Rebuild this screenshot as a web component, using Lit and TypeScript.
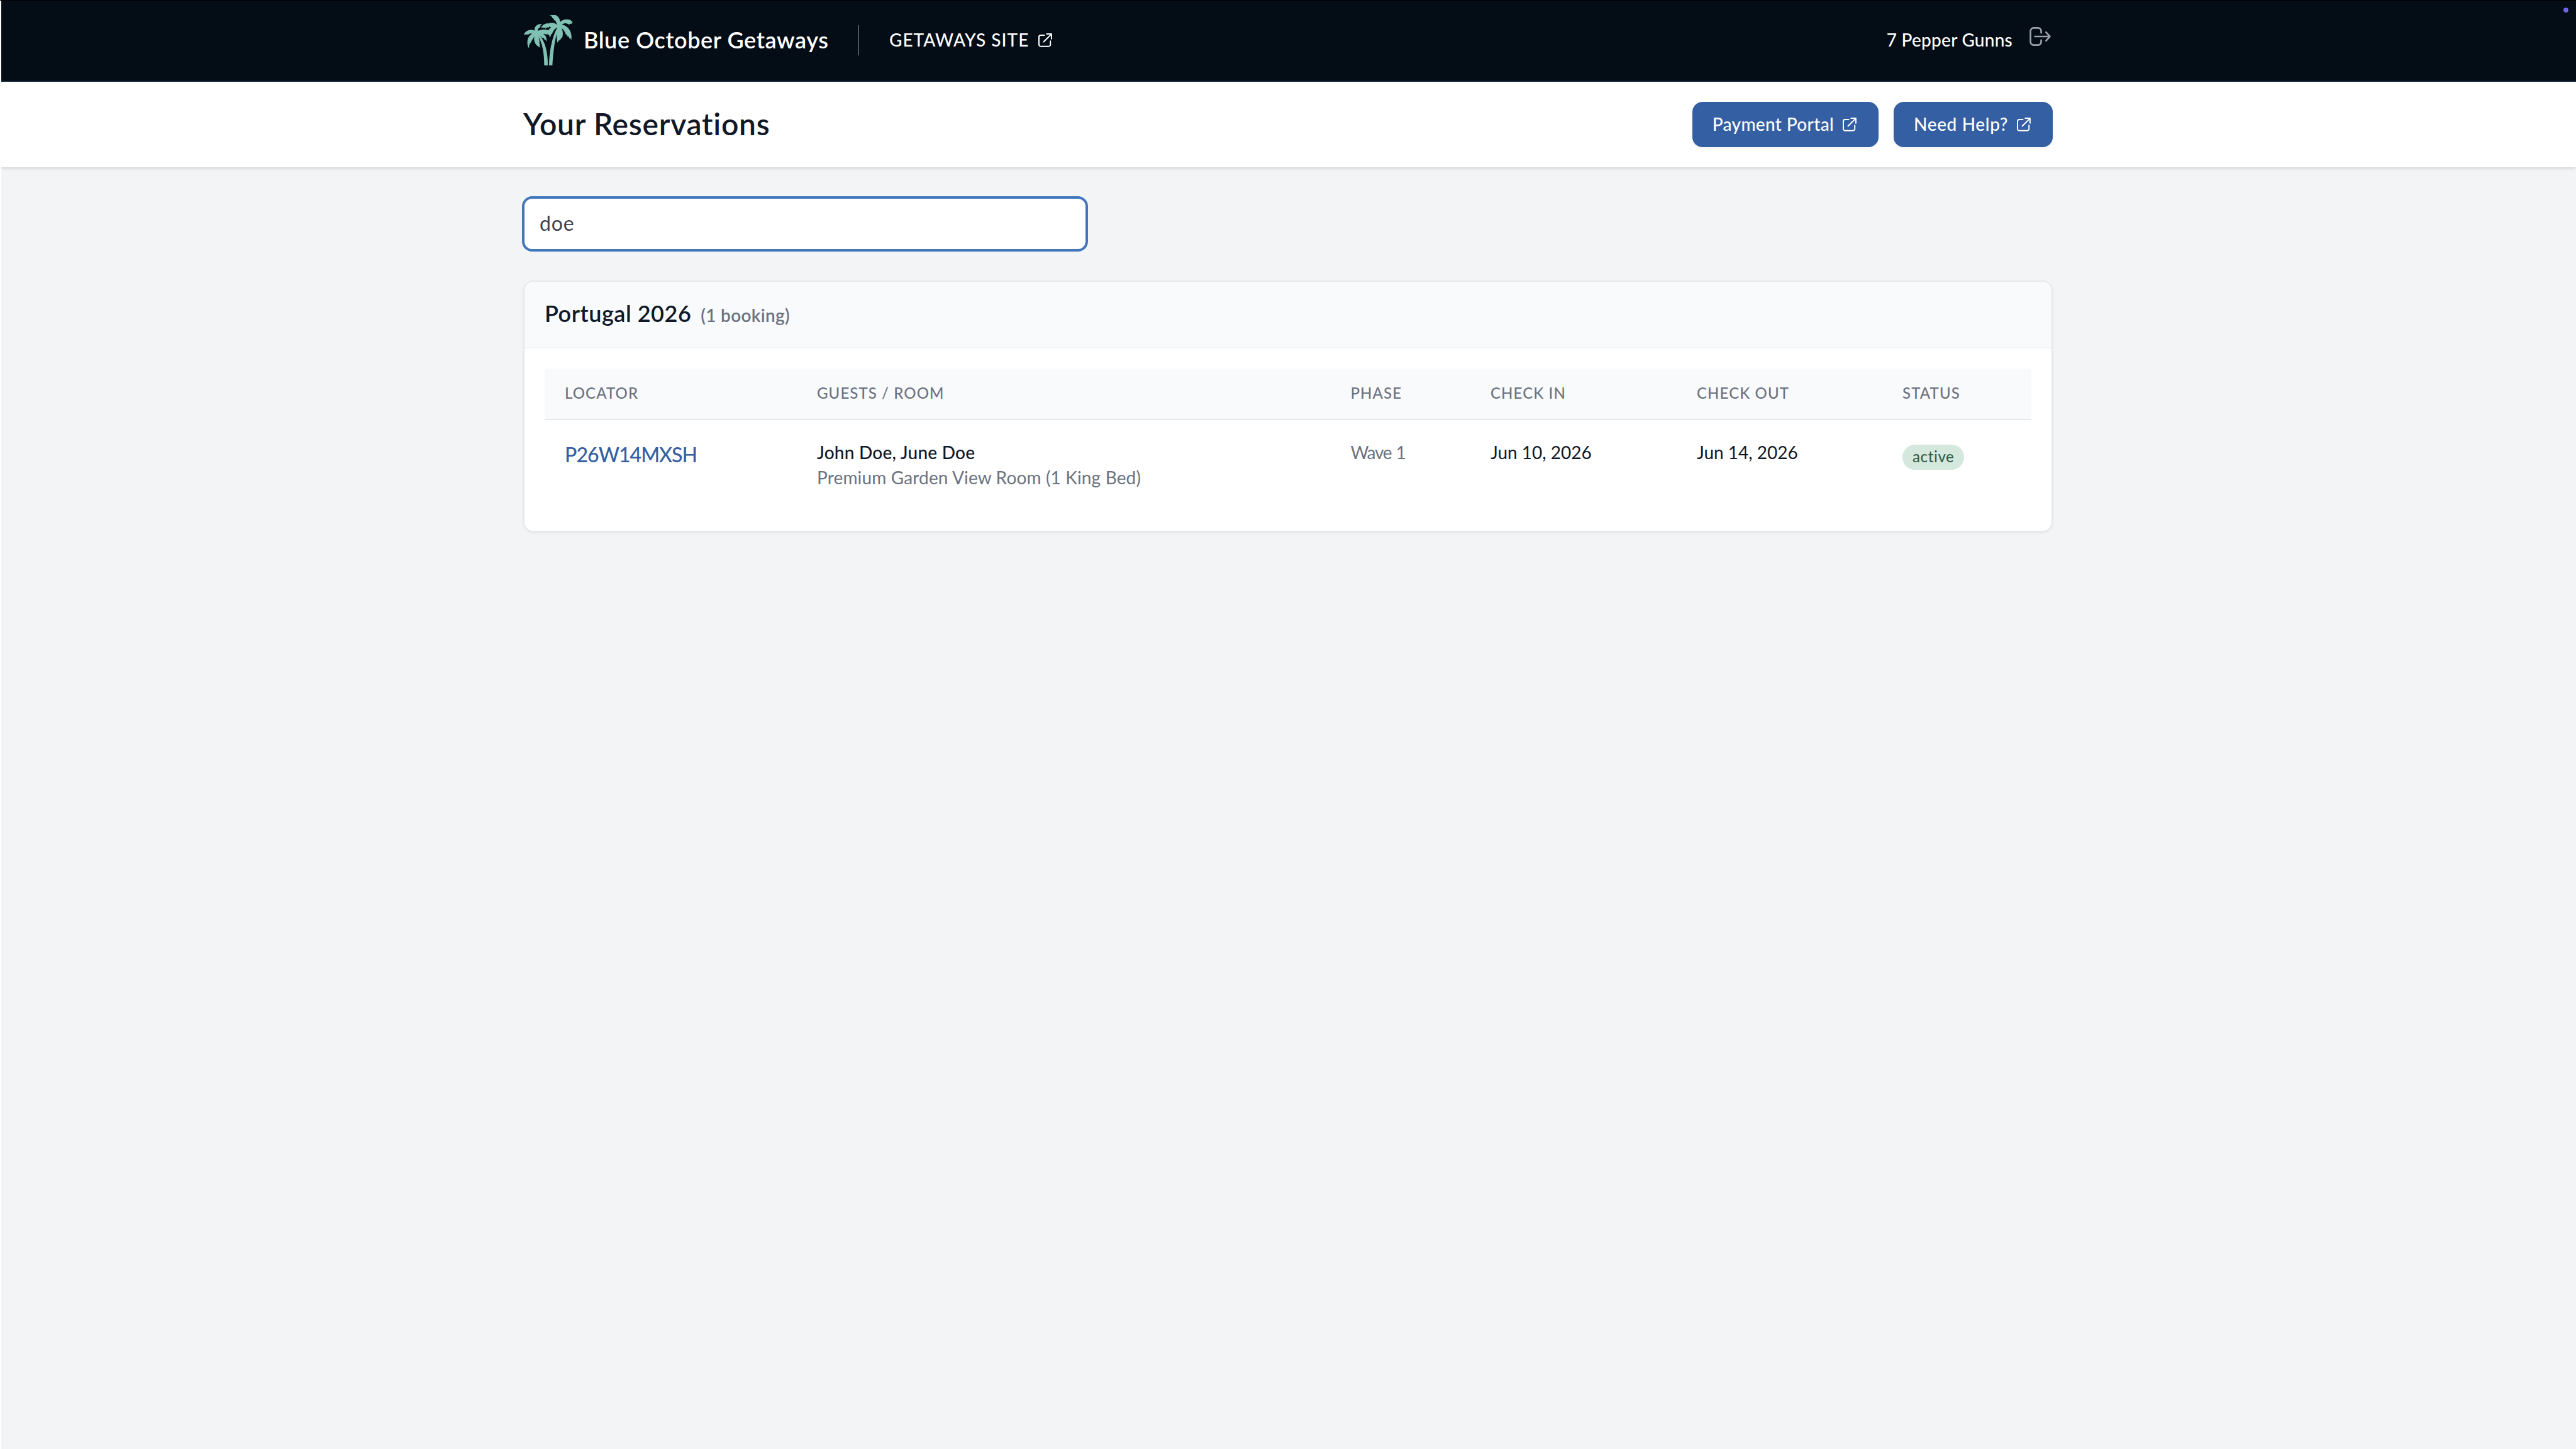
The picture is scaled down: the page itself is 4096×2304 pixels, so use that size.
import { LitElement, css, html, svg } from 'lit';
import { customElement, property } from 'lit/decorators.js';

// right trunk, left trunk, right crown, left crown
const palms = svg`
	<path d="M144 267C145 205 156 140 180 92L187 90C172 140 163 205 160 267Z"/>
	<path d="M121 267C121 212 114 160 88 120L96 119C126 152 139 205 138 267Z"/>
	<path d="M186 76C180 70 178 60 175 54L166 50L168 46L158 40L160 37L154 33L155 30L145 27H176C190 34 197 48 197 60C210 45 240 43 250 54L258 62L250 63L253 69L244 68L240 73L232 68C220 64 210 68 206 73C235 78 257 108 250 147L245 136L241 138L237 128L232 129L229 120L224 119C220 104 210 94 205 90C211 108 212 124 205 138L200 138L198 147L191 148L184 159L182 146C178 125 179 105 184 90L180 88C170 94 163 104 158 118L153 119L152 128L147 133L145 123L141 118L137 110L140 100C145 92 150 88 154 86L146 82L138 90L137 84L126 93L127 85L117 90L116 85L105 89C112 72 128 65 142 67C157 60 172 64 182 72Z"/>
	<path d="M74 110C66 114 62 116 56 115L48 117L44 123L38 117L34 124L30 118L23 124C28 100 58 92 75 102C72 82 88 66 112 69L102 75L106 80L99 82L101 87L94 89C91 94 90 98 91 102C108 94 128 94 140 100L152 106L147 110L150 116L143 114L140 122L134 117L130 121L124 116L117 117C128 124 134 136 132 153L126 143L122 145L120 136L114 138C108 130 100 124 95 122C94 134 98 146 99 156L97 161L102 167L98 170L103 182C82 176 68 152 74 130C66 142 60 152 56 160L52 161L53 168L48 168L50 176L46 184C34 152 42 122 74 110Z"/>
`;

@customElement('bo-external-icon')
export class ExternalIcon extends LitElement {

	static styles = css`
		:host {
			display: block;
			width: 28px;
			height: 28px;
		}
		svg {
			display: block;
			fill: none;
			stroke: currentColor;
			stroke-width: 2;
			stroke-linecap: round;
			stroke-linejoin: round;
		}
	`

	render() {
		return html`
		<svg width="28" height="28" viewBox="-3 -3 28 28">
			<path d="M9.5 2.9H3.8A2.8 2.8 0 0 0 1 5.7V17.9A2.8 2.8 0 0 0 3.8 20.7H16.4A2.8 2.8 0 0 0 19.2 17.9V12.2"/>
			<path d="M8.5 13.5L20.9 1.1M13.2 1.1H20.9V8.8"/>
		</svg>
		`
	}
}

@customElement('bo-navbar')
export class Navbar extends LitElement {

	@property({type: String}) user = '';

	static styles = css`
		:host {
			display: block;
		}
		nav {
			box-sizing: border-box;
			height: 130px;
			background: #040c15;
			border-top: 1px solid #000000;
			border-bottom: 2px solid #0b1a2f;
			color: #ffffff;
		}
		.inner {
			width: 2432px;
			height: 126px;
			margin: 0 auto;
			display: flex;
			align-items: center;
		}
		.logo {
			width: 80px;
			height: 80px;
			margin-right: 16px;
			fill: #80c1b3;
		}
		.brand {
			font-size: 36px;
			font-weight: 600;
			letter-spacing: 0.6px;
			padding-bottom: 3px;
		}
		.divider {
			width: 2px;
			height: 48px;
			margin: 0 48px 0 46.5px;
			background: #50555c;
		}
		.link {
			display: flex;
			align-items: center;
			gap: 12px;
			font-size: 28px;
			font-weight: 500;
			letter-spacing: 1px;
		}
		.link span, .user {
			padding-bottom: 2px;
		}
		.user {
			margin-left: auto;
			margin-right: 24px;
			font-size: 28px;
			font-weight: 500;
			letter-spacing: 0.25px;
		}
		.logout {
			width: 40px;
			height: 40px;
			margin-bottom: 12px;
			fill: none;
			stroke: #9ca0ad;
			stroke-width: 2.7;
			stroke-linecap: round;
			stroke-linejoin: round;
		}
	`

	render() {
		return html`
		<nav>
			<div class="inner">
				<svg class="logo" viewBox="21 27 240 240">${palms}</svg>
				<span class="brand">Blue October Getaways</span>
				<span class="divider"></span>
				<a class="link"><span>GETAWAYS SITE</span><bo-external-icon></bo-external-icon></a>
				<span class="user">${this.user}</span>
				<svg class="logout" viewBox="0 0 40 40">
					<path d="M21.6 14.2V11.4A5 5 0 0 0 16.6 6.4H9.6A5 5 0 0 0 4.6 11.4V28.6A5 5 0 0 0 9.6 33.6H16.6A5 5 0 0 0 21.6 28.6V25.8"/>
					<path d="M11.5 20H35.5M29.3 13.2L35.5 20L29.3 26.8"/>
				</svg>
			</div>
		</nav>
		`
	}
}

@customElement('bo-page-header')
export class PageHeader extends LitElement {

	@property({type: String}) heading = '';
	@property({attribute: false}) links: string[] = [];

	static styles = css`
		:host {
			display: block;
		}
		header {
			height: 136px;
			background: #ffffff;
			box-shadow: 0 2px 6px rgba(0, 0, 0, 0.1), 0 2px 4px -2px rgba(0, 0, 0, 0.1);
		}
		.inner {
			width: 2432px;
			height: 136px;
			margin: 0 auto;
			display: flex;
			align-items: center;
			gap: 24px;
		}
		h1 {
			margin: 0 auto 0 0;
			padding-bottom: 3px;
			font-size: 48px;
			font-weight: 600;
			letter-spacing: 0.75px;
			color: #111827;
		}
		.button {
			box-sizing: border-box;
			height: 72px;
			padding: 0 32px;
			display: flex;
			align-items: center;
			gap: 11px;
			border-radius: 16px;
			background: #355fa3;
			box-shadow: 0 2px 4px rgba(0, 0, 0, 0.05);
			color: #ffffff;
			font-size: 28px;
			font-weight: 500;
			letter-spacing: 0.34px;
		}
		.button:last-child {
			letter-spacing: 0.65px;
		}
		.button span {
			padding-bottom: 2px;
		}
	`

	render() {
		return html`
		<header>
			<div class="inner">
				<h1>${this.heading}</h1>
				${this.links.map(link => html`
					<a class="button"><span>${link}</span><bo-external-icon></bo-external-icon></a>
				`)}
			</div>
		</header>
		`
	}
}

@customElement('bo-trip-card')
export class TripCard extends LitElement {

	@property({type: String}) trip = '';
	@property({attribute: false}) bookings: any[] = [];

	static styles = css`
		:host {
			display: block;
		}
		.card {
			box-sizing: border-box;
			height: 400px;
			border: 2px solid #e5e7eb;
			border-radius: 16px;
			overflow: hidden;
			background: #ffffff;
			box-shadow: 0 2px 4px rgba(0, 0, 0, 0.05);
		}
		.title {
			box-sizing: border-box;
			height: 106px;
			padding: 28px 32px 0;
			display: flex;
			align-items: baseline;
			gap: 15px;
			background: #f9fafc;
			border-bottom: 2px solid #f3f4f6;
		}
		h2 {
			margin: 0;
			font-size: 36px;
			font-weight: 600;
			letter-spacing: 0.53px;
			color: #111827;
		}
		.count {
			font-size: 28px;
			font-weight: 600;
			letter-spacing: 0.3px;
			color: #6b7280;
		}
		.table {
			padding: 32px;
		}
		.row {
			display: grid;
			grid-template-columns: 401px 848.5px 222.5px 328px 327px 237px;
		}
		.row > div {
			padding: 31px 32px 0;
		}
		.head {
			height: 80px;
			background: #f9fafc;
			border-bottom: 2px solid #e5e7eb;
			font-size: 24px;
			line-height: 32px;
			font-weight: 500;
			letter-spacing: 1.1px;
			color: #6b7280;
		}
		.head > div {
			padding-top: 23px;
		}
		.booking {
			font-size: 28px;
			line-height: 40px;
			color: #111827;
		}
		.locator {
			font-size: 32px;
			line-height: 48px;
			font-weight: 500;
			letter-spacing: -0.95px;
			color: #355fa3;
		}
		.guests {
			font-weight: 500;
			letter-spacing: 0.25px;
		}
		.room {
			color: #6b7280;
			letter-spacing: 0.15px;
		}
		.phase {
			color: #6b7280;
			letter-spacing: -1.3px;
			word-spacing: 1.5px;
		}
		.badge {
			box-sizing: border-box;
			width: max-content;
			height: 40px;
			margin-top: 8px;
			padding: 0 16px;
			border-radius: 20px;
			background: #d5e8dd;
			color: #33604b;
			font-size: 24px;
			line-height: 38px;
			font-weight: 500;
			letter-spacing: 0.6px;
		}
	`

	render() {
		const n = this.bookings.length;
		return html`
		<div class="card">
			<div class="title">
				<h2>${this.trip}</h2>
				<span class="count">(${n} ${n === 1 ? 'booking' : 'bookings'})</span>
			</div>
			<div class="table">
				<div class="row head">
					${['LOCATOR', 'GUESTS / ROOM', 'PHASE', 'CHECK IN', 'CHECK OUT', 'STATUS'].map(h => html`<div>${h}</div>`)}
				</div>
				${this.bookings.map(b => html`
				<div class="row booking">
					<div><span class="locator">${b.locator}</span></div>
					<div>
						<div class="guests">${b.guests}</div>
						<div class="room">${b.room}</div>
					</div>
					<div class="phase">${b.phase}</div>
					<div>${b.checkIn}</div>
					<div>${b.checkOut}</div>
					<div><div class="badge">${b.status}</div></div>
				</div>
				`)}
			</div>
		</div>
		`
	}
}

@customElement('app-root')
export class AppRoot extends LitElement {

	bookings = [
		{
			locator: 'P26W14MXSH',
			guests: 'John Doe, June Doe',
			room: 'Premium Garden View Room (1 King Bed)',
			phase: 'Wave 1',
			checkIn: 'Jun 10, 2026',
			checkOut: 'Jun 14, 2026',
			status: 'active',
		},
	]

	static styles = css`
		:host {
			display: block;
			position: relative;
			height: 2304px;
			background: #f3f4f6;
			font-family: Lato, "Open Sans", sans-serif;
		}
		main {
			width: 2432px;
			margin: 0 auto;
			padding-top: 48px;
		}
		.search {
			box-sizing: border-box;
			display: block;
			width: 896px;
			height: 84px;
			margin-bottom: 48px;
			padding: 0 24px 3px;
			border: 2px solid #4277bd;
			border-radius: 14px;
			outline: none;
			box-shadow: 0 0 0 2px #4277bd;
			background: #ffffff;
			font: 400 32px Lato, "Open Sans", sans-serif;
			letter-spacing: 0.8px;
			color: #3f3f4b;
		}
		/* window edge and recording dot sit over the page */
		.edge {
			position: absolute;
			top: 1px;
			bottom: 0;
			left: 0;
			width: 2px;
			background: #ffffff;
		}
		.dot {
			position: absolute;
			top: 12px;
			right: 12px;
			width: 8px;
			height: 8px;
			border-radius: 50%;
			background: #6c63ee;
			box-shadow: 0 0 0 1px #000000;
		}
	`

	render() {
		return html`
		<bo-navbar user="7 Pepper Gunns"></bo-navbar>
		<bo-page-header heading="Your Reservations" .links=${['Payment Portal', 'Need Help?']}></bo-page-header>
		<main>
			<input class="search" type="text" .value=${'doe'}>
			<bo-trip-card trip="Portugal 2026" .bookings=${this.bookings}></bo-trip-card>
		</main>
		<div class="edge"></div>
		<div class="dot"></div>
		`
	}
}

declare global {
	interface HTMLElementTagNameMap {
		'app-root': AppRoot
	}
}
